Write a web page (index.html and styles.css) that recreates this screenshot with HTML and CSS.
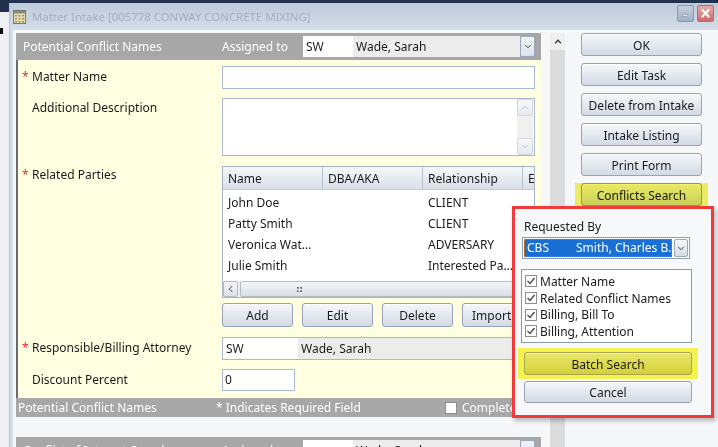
FILE: index.html
```html
<!DOCTYPE html>
<html>
<head>
<meta charset="utf-8">
<link rel="stylesheet" href="styles.css">
</head>
<body>
<div class="screen">
  <div class="topband"></div>
  <div class="main">
    <div class="bgwin"><div class="bgwin-top"></div><div class="bgwin-mark"></div></div>
    <div class="window">
      <div class="titlebar">
        <svg class="app-icon" viewBox="0 0 13 14">
          <rect x="0.5" y="0.5" width="12" height="13" fill="#e8dfae" stroke="#7a7a6a"/>
          <rect x="1" y="1" width="11" height="2.5" fill="#8a8a80"/>
          <g fill="#9a9060">
            <rect x="2" y="5" width="2" height="1.5"/><rect x="5.5" y="5" width="2" height="1.5"/><rect x="9" y="5" width="2" height="1.5"/>
            <rect x="2" y="8" width="2" height="1.5"/><rect x="5.5" y="8" width="2" height="1.5"/><rect x="9" y="8" width="2" height="1.5"/>
            <rect x="2" y="11" width="2" height="1.5"/><rect x="5.5" y="11" width="2" height="1.5"/><rect x="9" y="11" width="2" height="1.5"/>
          </g>
        </svg>
        <span class="title">Matter Intake [005778 CONWAY CONCRETE MIXING]</span>
        <div class="wctrls">
          <span class="wbtn min"><svg viewBox="0 0 17 17"><rect x="5" y="10" width="6" height="2" fill="#f4f6fa" stroke="#6f7f96" stroke-width="0.6"/></svg></span>
          <span class="wbtn close"><svg viewBox="0 0 17 17"><path d="M5 4.5 L12 12 M12 4.5 L5 12" stroke="#ffffff" stroke-width="2.4" stroke-linecap="round"/></svg></span>
        </div>
      </div>
      <div class="client">
        <div class="formcol">
          <div class="sec-head">
            <span class="h-title">Potential Conflict Names</span>
            <span>Assigned to</span>
            <div class="hcombo">
              <span class="hc-code">SW</span>
              <span class="hc-name">Wade, Sarah</span>
              <span class="dd"><svg viewBox="0 0 9 6"><path d="M1 1 L4.5 4.5 L8 1" fill="none" stroke="#444" stroke-width="1.2"/></svg></span>
            </div>
          </div>
          <div class="sec-body">
            <div class="row r1">
              <div class="lbl"><span class="star">*</span>Matter Name</div>
              <div class="field input"></div>
            </div>
            <div class="row r2">
              <div class="lbl lbl-desc"><span class="star"></span>Additional Description</div>
              <div class="field textarea">
                <div class="ta-scroll">
                  <span class="ta-btn"><svg viewBox="0 0 9 6"><path d="M1 5 L4.5 1.5 L8 5" fill="none" stroke="#b8c2cf" stroke-width="1.1"/></svg></span>
                  <span class="ta-track"></span>
                  <span class="ta-btn"><svg viewBox="0 0 9 6"><path d="M1 1 L4.5 4.5 L8 1" fill="none" stroke="#b8c2cf" stroke-width="1.1"/></svg></span>
                </div>
              </div>
            </div>
            <div class="row r3">
              <div class="lbl lbl-rp"><span class="star">*</span>Related Parties</div>
              <div class="field grid">
                <div class="g-head"><span>Name</span><span>DBA/AKA</span><span>Relationship</span><span>E</span></div>
                <div class="g-rows">
                  <div class="g-row"><span>John Doe</span><span></span><span>CLIENT</span></div>
                  <div class="g-row"><span>Patty Smith</span><span></span><span>CLIENT</span></div>
                  <div class="g-row"><span>Veronica Wat...</span><span></span><span>ADVERSARY</span></div>
                  <div class="g-row"><span>Julie Smith</span><span></span><span>Interested Pa...</span></div>
                </div>
                <div class="g-hscroll">
                  <span class="hs-btn"><svg viewBox="0 0 6 9"><path d="M5 1 L1.5 4.5 L5 8" fill="none" stroke="#333" stroke-width="1.1"/></svg></span>
                  <span class="hs-thumb"><svg viewBox="0 0 6 6"><g fill="#555"><rect x="0" y="0" width="2" height="2"/><rect x="4" y="0" width="2" height="2"/><rect x="0" y="4" width="2" height="2"/><rect x="4" y="4" width="2" height="2"/></g></svg></span>
                </div>
              </div>
            </div>
            <div class="row r4">
              <div class="lbl"></div>
              <div class="field btnrow">
                <span class="btn">Add</span>
                <span class="btn">Edit</span>
                <span class="btn">Delete</span>
                <span class="btn">Import</span>
              </div>
            </div>
            <div class="row r5">
              <div class="lbl"><span class="star">*</span>Responsible/Billing Attorney</div>
              <div class="field atty">
                <span class="at-code">SW</span>
                <span class="at-name">Wade, Sarah</span>
              </div>
            </div>
            <div class="row r6">
              <div class="lbl"><span class="star"></span>Discount Percent</div>
              <div class="field input small">0</div>
            </div>
          </div>
          <div class="sec-foot">
            <span class="f1">Potential Conflict Names</span>
            <span>* Indicates Required Field</span>
            <span class="f3"><span class="fchk"></span>Complete</span>
          </div>
          <div class="sec-gap"></div>
          <div class="sec-head">
            <span class="h-title">Conflict of Interest Search</span>
            <span>Assigned to</span>
            <div class="hcombo">
              <span class="hc-code"></span>
              <span class="hc-name">Wade, Sarah</span>
              <span class="dd"></span>
            </div>
          </div>
        </div>
        <div class="vscroll">
          <div class="vs-up"><svg viewBox="0 0 9 6"><path d="M1 5 L4.5 1.5 L8 5" fill="none" stroke="#3a3a3a" stroke-width="1.6"/></svg></div>
          <div class="vs-track"></div>
        </div>
        <div class="btncol">
          <span class="btn rbtn">OK</span>
          <span class="btn rbtn">Edit Task</span>
          <span class="btn rbtn">Delete from Intake</span>
          <span class="btn rbtn">Intake Listing</span>
          <span class="btn rbtn">Print Form</span>
          <span class="btn rbtn">Conflicts Search</span>
        </div>
      </div>
    </div>
  </div>

  <div class="hl hl-conf"></div>

  <div class="popup">
    <div class="p-label">Requested By</div>
    <div class="p-combo">
      <div class="p-sel"><span class="p-code">CBS</span><span class="p-name">Smith, Charles B.</span></div>
      <span class="dd pdd"><svg viewBox="0 0 9 6"><path d="M1 1 L4.5 4.5 L8 1" fill="none" stroke="#444" stroke-width="1.2"/></svg></span>
    </div>
    <div class="p-list">
      <div class="p-item"><svg class="chk" viewBox="0 0 12 12"><rect x="0.5" y="0.5" width="11" height="11" fill="#fff" stroke="#8e8e8e"/><path d="M2.5 6 L5 8.5 L9.5 3" fill="none" stroke="#4a4a4a" stroke-width="1.4"/></svg>Matter Name</div>
      <div class="p-item"><svg class="chk" viewBox="0 0 12 12"><rect x="0.5" y="0.5" width="11" height="11" fill="#fff" stroke="#8e8e8e"/><path d="M2.5 6 L5 8.5 L9.5 3" fill="none" stroke="#4a4a4a" stroke-width="1.4"/></svg>Related Conflict Names</div>
      <div class="p-item"><svg class="chk" viewBox="0 0 12 12"><rect x="0.5" y="0.5" width="11" height="11" fill="#fff" stroke="#8e8e8e"/><path d="M2.5 6 L5 8.5 L9.5 3" fill="none" stroke="#4a4a4a" stroke-width="1.4"/></svg>Billing, Bill To</div>
      <div class="p-item"><svg class="chk" viewBox="0 0 12 12"><rect x="0.5" y="0.5" width="11" height="11" fill="#fff" stroke="#8e8e8e"/><path d="M2.5 6 L5 8.5 L9.5 3" fill="none" stroke="#4a4a4a" stroke-width="1.4"/></svg>Billing, Attention</div>
    </div>
    <div class="p-batch-wrap"><span class="btn pbtn batch">Batch Search</span></div>
    <span class="btn pbtn cancel">Cancel</span>
  </div>
</div>
</body>
</html>
```

FILE: styles.css
```css
* { box-sizing: border-box; }
html, body { margin: 0; padding: 0; }
body {
  width: 718px; height: 447px; overflow: hidden;
  font-family: "Noto Sans", "Open Sans", sans-serif;
  font-size: 12px; color: #1b1b1b; background: #eef1f5;
}
.screen { position: relative; width: 718px; height: 447px; overflow: hidden; display: flex; flex-direction: column; }
.topband { height: 3px; flex: none; background: #22324e; }
.main { flex: 1; display: flex; min-height: 0; }
.bgwin { width: 10px; flex: none; background: #eef0f3; border-right: 1px solid #b9c4d2; }
.bgwin-top { height: 9px; background: #22324e; }
.bgwin-mark { margin-top: 16px; width: 3px; height: 6px; background: #111; }

.window { flex: 1; min-width: 0; display: flex; flex-direction: column; background: #dfe6ee; }
.titlebar {
  height: 27px; flex: none; display: flex; align-items: center;
  padding: 0 4px 0 3px;
  background: linear-gradient(#bccadb, #d5dee9);
}
.app-icon { width: 13px; height: 14px; flex: none; }
.title { margin-left: 6px; flex: 1; color: #a1afc1; font-size: 11.4px; white-space: nowrap; }
.wctrls { display: flex; gap: 3px; align-self: flex-start; margin-top: 2px; }
.wbtn { width: 17px; height: 17px; border: 1px solid #8a99b0; border-radius: 2px; display: block; }
.wbtn svg { display: block; width: 15px; height: 15px; }
.wbtn.min { background: linear-gradient(#c3cfde, #9fb0c6); }
.wbtn.close { background: linear-gradient(#e8a8a8, #cc6c6c); border-color: #a87272; }

.client {
  flex: 1; min-height: 0; overflow: hidden;
  display: flex; align-items: stretch;
  padding: 3px 0 0 3px;
  border-left: 3px solid #d6dee8;
  background: #f6f7f9;
}
.formcol { width: 525px; flex: none; display: flex; flex-direction: column; }
.formcol > * { flex: none; }

.sec-head {
  height: 27px; background: #a7a7a7; color: #fff;
  display: grid; grid-template-columns: 206px 81px 232px; align-items: center;
}
.sec-head span { white-space: nowrap; }
.h-title { padding-left: 7px; }
.hcombo { display: flex; height: 21px; color: #1b1b1b; }
.hc-code { width: 50px; background: #fff; padding-left: 3px; line-height: 21px; }
.hc-name { flex: 1; background: #ececec; padding-left: 3px; line-height: 21px; }
.dd {
  width: 15px; flex: none; display: flex; align-items: center; justify-content: center;
  background: linear-gradient(#f4f6f9, #d6dce5); border: 1px solid #9aa8bc; border-radius: 2px;
}
.dd svg { width: 8px; height: 5px; }
.hcombo .dd { background: linear-gradient(#f0f2f5, #dde2ea); }

.sec-body {
  background: #ffffe2; border-left: 2px solid #6b6b6b;
  padding: 0 6px 7px 0; overflow: hidden;
  display: flex; flex-direction: column;
}
.row { display: flex; align-items: flex-start; flex: none; }
.lbl { width: 204px; flex: none; display: flex; padding-left: 4px; line-height: 17px; padding-top: 2px; white-space: nowrap; }
.lbl-desc { padding-top: 1px; }
.lbl-rp { padding-top: 0; }
.star { width: 10px; color: #e02b2b; flex: none; }
.field { flex: none; width: 313px; }
.input { height: 23px; background: #fff; border: 1px solid #a9b8cc; padding-left: 2px; line-height: 21px; }
.r1 { margin-top: 6px; }
.r2 { margin-top: 9px; }
.r3 { margin-top: 10px; }
.r4 { margin-top: 5px; }
.r5 { margin-top: 10px; }
.r6 { margin-top: 9px; }
.small { width: 73px; height: 22px; line-height: 20px; }

.textarea { height: 58px; background: #fff; border: 1px solid #a9b8cc; display: flex; justify-content: flex-end; }
.ta-scroll { width: 17px; display: flex; flex-direction: column; padding: 0 1px 0 0; }
.ta-btn {
  height: 17px; flex: none; display: flex; align-items: center; justify-content: center;
  background: linear-gradient(#f6f7f9, #e6e9ee); border: 1px solid #d0d7e1; border-radius: 2px;
}
.ta-btn svg { width: 8px; height: 5px; }
.ta-track { flex: 1; background: #f0f0f0; }

.grid { height: 132px; border: 1px solid #a3b3c9; background: #fff; display: flex; flex-direction: column; overflow: hidden; }
.g-head { height: 23px; flex: none; display: flex; }
.g-head span {
  width: 100px; flex: none; padding: 1px 0 0 5px; line-height: 21px;
  background: linear-gradient(#f6f8fb, #d9dfe8); border-right: 1px solid #b6c0cf; border-bottom: 1px solid #c4ccd8;
}
.g-rows { flex: 1; padding-top: 2px; }
.g-row { height: 21px; display: flex; line-height: 21px; }
.g-row span { width: 100px; flex: none; padding-left: 5px; white-space: nowrap; }
.g-hscroll { height: 16px; flex: none; display: flex; gap: 2px; background: #eceef1; }
.hs-btn {
  width: 15px; flex: none; display: flex; align-items: center; justify-content: center;
  background: linear-gradient(#f5f6f8, #dde1e7); border: 1px solid #b3bcc9; border-radius: 2px;
}
.hs-btn svg { width: 5px; height: 8px; }
.hs-thumb {
  flex: 1; display: flex; align-items: center; padding-left: 56px;
  background: linear-gradient(#f3f5f8, #d9dee6); border: 1px solid #b3bcc9; border-radius: 2px;
}
.hs-thumb svg { width: 5px; height: 5px; }

.btn {
  display: flex; align-items: center; justify-content: center;
  padding-top: 1px;
  background: linear-gradient(#f5f7fa, #e4e9f0 50%, #d4dae4);
  border: 1px solid #96a3b7; border-radius: 3px;
  box-shadow: inset 0 1px 0 #ffffff;
  color: #1b1b1b; white-space: nowrap; overflow: hidden;
}
.btnrow { display: flex; gap: 9px; width: 340px; height: 24px; }
.btnrow .btn { width: 71px; flex: none; }
.btnrow .btn:last-child { justify-content: flex-start; padding-left: 9px; }

.atty { display: flex; height: 23px; width: 330px; border: 1px solid #a9b8cc; border-right: none; line-height: 21px; }
.at-code { width: 75px; background: #fff; padding-left: 3px; }
.at-name { flex: 1; background: #ececec; padding-left: 3px; }

.sec-foot {
  height: 19px; background: #a7a7a7; color: #fff;
  display: grid; grid-template-columns: 200px 229px 1fr; align-items: center; white-space: nowrap;
}
.f1 { padding-left: 2px; }
.f3 { display: flex; align-items: center; gap: 5px; }
.fchk { width: 12px; height: 12px; background: #fff; border: 1px solid #8e8e8e; }
.sec-gap { height: 20px; }

.vscroll { width: 15px; flex: none; margin-left: 9px; display: flex; flex-direction: column; }
.vs-up { height: 17px; flex: none; display: flex; align-items: center; justify-content: center; background: #eeeeee; }
.vs-up svg { width: 8px; height: 5px; }
.vs-track { flex: 1; background: #dcdcdc; }

.btncol { width: 121px; flex: none; margin-left: 16px; display: flex; flex-direction: column; gap: 7px; }
.rbtn { height: 23px; flex: none; }

.hl { position: absolute; background: #f2f048; mix-blend-mode: multiply; opacity: 0.85; }
.hl-conf { left: 575px; top: 183px; width: 133px; height: 30px; }

.popup {
  position: absolute; left: 512px; top: 206px; width: 202px; height: 212px;
  border: 3px solid #ef3b3b; background: #f7f8fa;
  box-shadow: 2px 3px 4px rgba(0, 0, 0, 0.25);
  display: flex; flex-direction: column; align-items: flex-start;
}
.p-label { margin: 9px 0 0 9px; line-height: 17px; }
.p-combo { margin: 2px 0 0 7px; width: 168px; height: 22px; display: flex; gap: 2px; border: 1px solid #8b9cb6; padding: 1px; background: #fff; }
.p-sel {
  flex: 1; display: flex; background: #1a6fd5; color: #fff; line-height: 17px;
  outline: 1px dotted #c8791a; outline-offset: -1px; overflow: hidden; white-space: nowrap;
}
.p-code { width: 52px; flex: none; padding-left: 3px; }
.pdd { width: 14px; padding-top: 0; }
.p-list { margin: 10px 0 0 6px; width: 171px; height: 74px; background: #fff; border: 1px solid #8c99ab; padding: 3px 0 0 3px; }
.p-item { display: flex; align-items: center; height: 16.7px; gap: 3px; white-space: nowrap; }
.chk { width: 12px; height: 12px; flex: none; }
.p-batch-wrap { margin: 5px 0 0 3px; padding: 4px 6px; background: #f4f250; }
.pbtn { width: 168px; height: 23px; }
.batch { background: linear-gradient(#e8e66a, #d4d03a); border-color: #a8a650; box-shadow: inset 0 1px 0 #f4f2a0; }
.cancel { margin: 2px 0 0 9px; height: 22px; }
```
